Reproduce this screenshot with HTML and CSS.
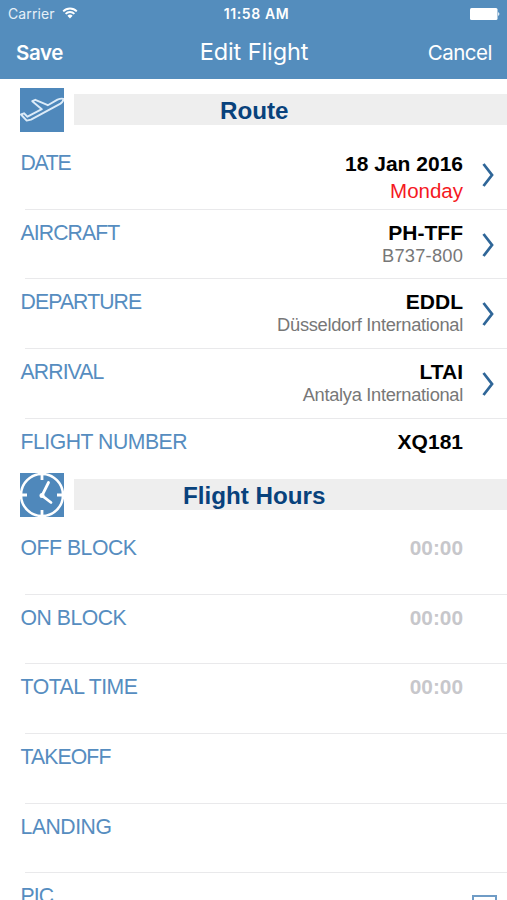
FILE: index.html
```html
<!DOCTYPE html>
<html lang="en">
<head>
    <meta charset="UTF-8">
    <meta name="viewport" content="width=device-width, initial-scale=1.0">
    <title>Edit Flight</title>
    <link rel="stylesheet" href="styles.css">
</head>
<body>
    <header class="top">
        <div class="status">
            <div class="carrier">
                <span>Carrier</span>
                <svg class="wifi" viewBox="0 0 16 12" width="16" height="12">
                    <path d="M1.2 4.3a9.6 9.6 0 0 1 13.6 0M3.6 6.9a6.2 6.2 0 0 1 8.8 0" fill="none" stroke="#fff" stroke-width="1.9"/>
                    <path d="M8 11.4 5.4 8.8a3.7 3.7 0 0 1 5.2 0z" fill="#fff"/>
                </svg>
            </div>
            <span class="clock">11:58 AM</span>
            <svg class="battery" viewBox="0 0 30 12" width="30" height="12">
                <rect x="0" y="0" width="27.5" height="12" rx="1.5" fill="#fff"/>
                <path d="M28.2 4q2.4 2 0 4z" fill="#fff"/>
            </svg>
        </div>
        <nav class="navbar">
            <a class="save">Save</a>
            <h1>Edit Flight</h1>
            <a class="cancel">Cancel</a>
        </nav>
    </header>

    <main>
        <!-- Route -->
        <div class="section">
            <svg class="section-icon" viewBox="0 0 44 44" width="44" height="44">
                <rect width="44" height="44" fill="#4f88bb"/>
                <path d="M1 26.5 4 25.3 7.5 28.7 21.8 21.2 12.3 13.2 15.3 11.8 27.8 17.2 37.5 11.6Q41 10.2 43.4 10.8 43.5 13.5 40.5 15.6L11 31.6 6.7 32.6Z" fill="none" stroke="#dcebf8" stroke-width="1.9" stroke-linejoin="round"/>
            </svg>
            <h2>Route</h2>
        </div>
        <div class="row">
            <span class="label tightest">DATE</span>
            <div class="value date"><b>18 Jan 2016</b><span class="day">Monday</span></div>
            <svg class="arrow" viewBox="0 0 12 24" width="12" height="24"><path d="M1.5 1 10 12 1.5 23"/></svg>
        </div>
        <div class="row">
            <span class="label tight">AIRCRAFT</span>
            <div class="value"><b>PH-TFF</b><span class="type">B737-800</span></div>
            <svg class="arrow" viewBox="0 0 12 24" width="12" height="24"><path d="M1.5 1 10 12 1.5 23"/></svg>
        </div>
        <div class="row">
            <span class="label tight">DEPARTURE</span>
            <div class="value"><b>EDDL</b><span class="airport">Düsseldorf International</span></div>
            <svg class="arrow" viewBox="0 0 12 24" width="12" height="24"><path d="M1.5 1 10 12 1.5 23"/></svg>
        </div>
        <div class="row">
            <span class="label tight">ARRIVAL</span>
            <div class="value"><b>LTAI</b><span class="airport">Antalya International</span></div>
            <svg class="arrow" viewBox="0 0 12 24" width="12" height="24"><path d="M1.5 1 10 12 1.5 23"/></svg>
        </div>
        <div class="row short">
            <span class="label">FLIGHT NUMBER</span>
            <div class="value"><b>XQ181</b></div>
        </div>

        <!-- Flight hours -->
        <div class="section">
            <svg class="section-icon" viewBox="0 0 44 44" width="44" height="44">
                <rect width="44" height="44" fill="#4f88bb"/>
                <circle cx="22" cy="22" r="21" fill="none" stroke="#fff" stroke-width="2.5"/>
                <path d="M22 0v7M22 37v7M0 22h7M37 22h7" stroke="#fff" stroke-width="2.8"/>
                <path d="M28.5 9.5 22 22.5 31 29.5" fill="none" stroke="#fff" stroke-width="2.8" stroke-linecap="round"/>
                <circle cx="22" cy="22.5" r="2.5" fill="#fff"/>
            </svg>
            <h2>Flight Hours</h2>
        </div>
        <div class="row">
            <span class="label">OFF BLOCK</span>
            <div class="value"><b class="empty">00:00</b></div>
        </div>
        <div class="row">
            <span class="label">ON BLOCK</span>
            <div class="value"><b class="empty">00:00</b></div>
        </div>
        <div class="row">
            <span class="label">TOTAL TIME</span>
            <div class="value"><b class="empty">00:00</b></div>
        </div>
        <div class="row">
            <span class="label tight">TAKEOFF</span>
        </div>
        <div class="row">
            <span class="label">LANDING</span>
        </div>
        <div class="row">
            <span class="label tight">PIC</span>
            <span class="checkbox"></span>
        </div>
    </main>
</body>
</html>
```
FILE: styles.css
```css
* {
    box-sizing: border-box;
}

body {
    margin: 0;
    height: 900px;
    overflow: hidden;
    background: #fff;
    font-family: "Liberation Sans", Arial, sans-serif;
}

/* Header */
.top {
    height: 79px;
    background: #548dbd;
    color: #fff;
    font-family: Inter, sans-serif;
}

.status {
    display: grid;
    grid-template-columns: 1fr auto 1fr;
    align-items: center;
    height: 27px;
    padding: 0 7px 0 8px;
    font-size: 14px;
}

.carrier {
    display: flex;
    align-items: center;
    gap: 7px;
    color: #e6f0f8;
    letter-spacing: 0.1px;
}

.wifi {
    margin-top: -2px;
}

.clock {
    padding-left: 5px;
    font-weight: 600;
    font-size: 14px;
    letter-spacing: 0.6px;
}

.battery {
    justify-self: end;
}

.navbar {
    display: grid;
    grid-template-columns: 1fr auto 1fr;
    align-items: center;
    height: 50px;
    padding: 0 15px 0 16px;
    font-size: 20.5px;
}

.navbar h1 {
    margin: -2px 0 0;
    font-size: 23.5px;
    font-weight: 400;
    letter-spacing: -0.1px;
}

.save {
    font-weight: 600;
    letter-spacing: -0.4px;
}

.cancel {
    justify-self: end;
    letter-spacing: -0.5px;
}

/* Section headings */
.section {
    display: flex;
    align-items: center;
    gap: 10px;
    height: 61px;
    padding-left: 20.4px;
}

.section-icon {
    flex: none;
}

.section h2 {
    flex: 1;
    height: 31px;
    margin: 0;
    padding-right: 73px;
    background: #eee;
    color: #08427c;
    font-size: 24.2px;
    line-height: 33px;
    text-align: center;
}

/* Rows */
.row {
    position: relative;
    display: flex;
    height: 69.67px;
    padding: 10px 13px 0 20.6px;
}

/* the separator starts a little right of the label */
.row::after {
    content: "";
    position: absolute;
    left: 25px;
    right: 0;
    bottom: 0;
    height: 1px;
    background: #e9e9eb;
}

.row.short {
    height: 45.5px;
}

.row.short::after {
    display: none;
}

.label {
    color: #568dc0;
    font-size: 21.2px;
    line-height: 26px;
    letter-spacing: -0.48px;
}

.label.tight {
    letter-spacing: -0.9px;
}

.label.tightest {
    letter-spacing: -1.3px;
}

.value {
    display: flex;
    flex-direction: column;
    align-items: flex-end;
    margin-left: auto;
    margin-right: 31px;
    color: #777;
    font-size: 18.3px;
    line-height: 22px;
}

.value b {
    color: #000;
    font-size: 21px;
    line-height: 25px;
}

.value.date b {
    line-height: 27px;
}

.value .type {
    letter-spacing: 0.2px;
}

.value .airport {
    letter-spacing: -0.3px;
}

.value .day {
    color: #f5191f;
    font-size: 20.5px;
    line-height: 27px;
}

.value .empty {
    color: #c7c7cb;
    font-size: 20.8px;
    line-height: 26px;
}

.arrow {
    flex: none;
    margin: 13px 0 0 -12px;
    fill: none;
    stroke: #2f6698;
    stroke-width: 2.8;
}

.checkbox {
    width: 25px;
    height: 25px;
    margin: 12px -3px 0 auto;
    border: 2px solid #6f9cc6;
}
```
